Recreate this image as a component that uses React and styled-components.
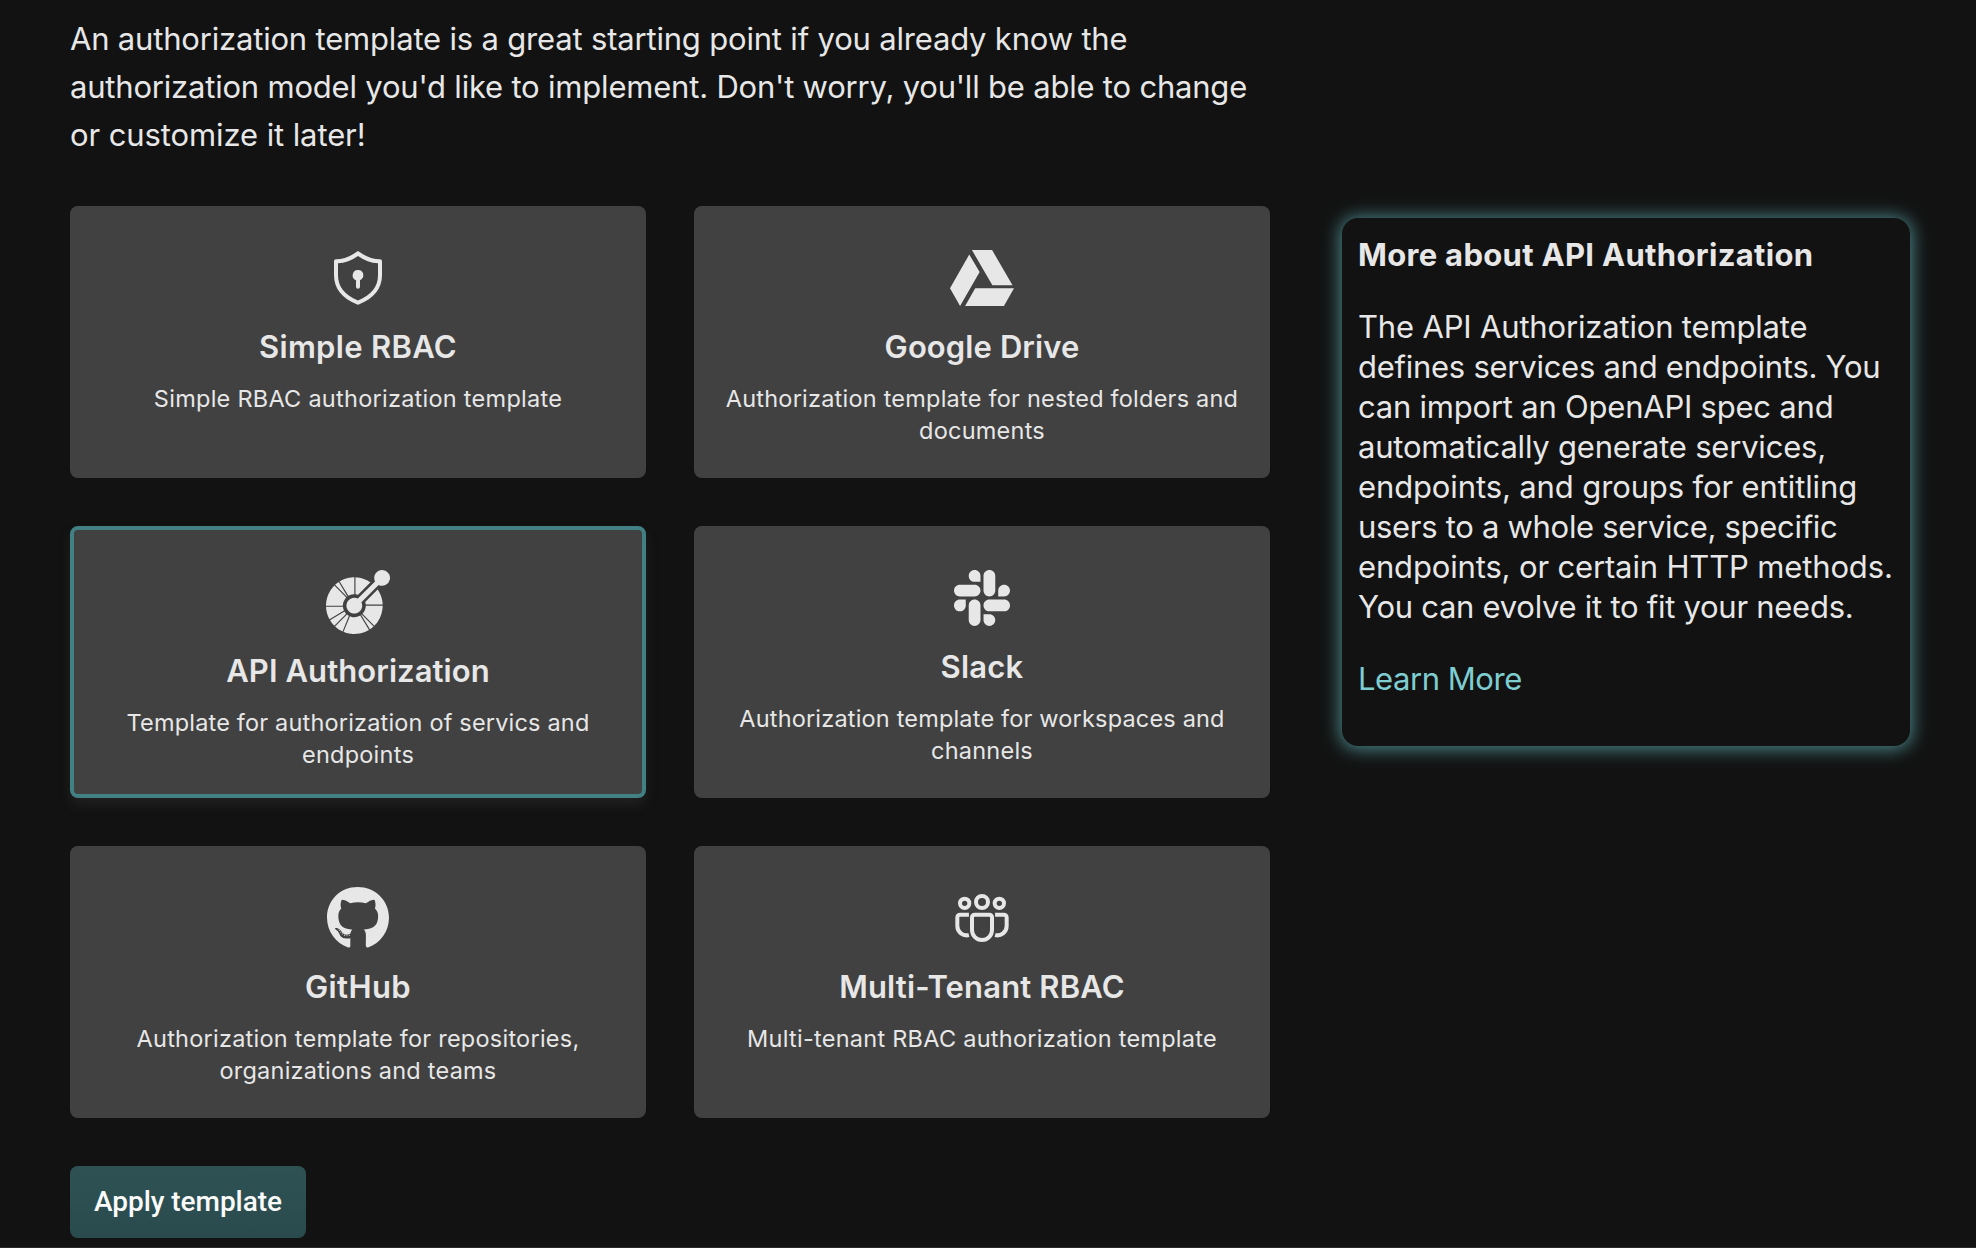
import React from "react";
import styled, { createGlobalStyle, css } from "styled-components";
import { FaGithub, FaGoogleDrive, FaSlack } from "react-icons/fa";
import { SiOpenapiinitiative } from "react-icons/si";

const GlobalStyle = createGlobalStyle`
  *, *::before, *::after { box-sizing: border-box; }
  body {
    margin: 0;
    background: #121212;
    color: #e7e7e7;
    font-family: Inter, "Liberation Sans", sans-serif;
  }
  h2, h3, p { margin: 0; }
`;

const Page = styled.div`
  display: flex;
  flex-direction: column;
  height: 1248px;
  padding: 15px 66px 0 70px;
  overflow: hidden;
`;
const Intro = styled.p`
  height: 144px;
  font-size: 31px;
  line-height: 48px;
`;
const Line = styled.span`
  display: block;
  white-space: nowrap;
  letter-spacing: ${(p) => p.$track || 0}px;
`;
const Content = styled.div`
  display: flex;
  align-items: flex-start;
  gap: 72px;
  margin-top: 47px;
`;
const Grid = styled.div`
  display: grid;
  grid-template-columns: repeat(2, 576px);
  grid-auto-rows: 272px;
  gap: 48px;
`;
const Card = styled.button`
  display: flex;
  flex-direction: column;
  align-items: center;
  padding: 40px 0 0;
  border: 0;
  border-radius: 8px;
  background: #414141;
  color: #e7e7e7;
  font-family: inherit;
  text-align: center;
  ${(p) =>
    p.$selected &&
    css`
      border: 4px solid #418083;
      box-shadow: 0 7px 12px rgba(65, 65, 65, 0.3);
    `}
`;
const IconBox = styled.span`
  display: flex;
  width: 64px;
  height: 64px;
  font-size: 64px;
`;
const Title = styled.h3`
  margin-top: 17px;
  font-size: 31px;
  font-weight: 600;
  line-height: 40px;
  letter-spacing: ${(p) => p.$track}px;
`;
const Description = styled.p`
  margin-top: 16px;
  font-size: 23.5px;
  line-height: 32px;
`;
const Panel = styled.aside`
  width: 568px;
  height: 528px;
  margin-top: 12px;
  padding: 17px 16px 0;
  border-radius: 16px;
  background: #121212;
  box-shadow: 0 1px 18px 2px #4c888b;
`;
const PanelTitle = styled.h2`
  font-size: 31px;
  font-weight: 700;
  line-height: 40px;
  letter-spacing: 0.31px;
`;
const PanelText = styled.p`
  margin-top: 32px;
  font-size: 31px;
  line-height: 40px;
`;
const Link = styled.a`
  display: block;
  margin-top: 32px;
  color: #7ecdd1;
  font-size: 31px;
  line-height: 40px;
  letter-spacing: -0.45px;
`;
const ApplyButton = styled.button`
  flex: none;
  width: 236px;
  height: 72px;
  margin-top: 48px;
  padding: 0;
  border: 0;
  border-radius: 8px;
  background: linear-gradient(#2e5254, #2a4b4d);
  color: #fafafa;
  font: 500 28px/72px Roboto, sans-serif;
  letter-spacing: -0.06px;
`;
const Footer = styled.div`
  flex: none;
  height: 1px;
  margin: auto -66px 0 -70px;
  background: #2b2b2b;
`;

const ShieldKeyhole = () => (
  <svg width="64" height="64" viewBox="0 0 24 24" fill="currentColor">
    <path
      fillRule="evenodd"
      d="M3 5.75c0-.41.34-.75.75-.75 2.66 0 5.26-.94 7.8-2.85.27-.2.63-.2.9 0C14.99 4.05 17.59 5 20.25 5c.41 0 .75.34.75.75V11c0 5-2.96 8.68-8.73 10.95a.75.75 0 0 1-.54 0C5.96 19.68 3 16 3 11V5.75Zm1.5.73V11c0 4.26 2.45 7.38 7.5 9.44 5.05-2.06 7.5-5.18 7.5-9.44V6.48c-2.63-.15-5.14-1.07-7.5-2.76-2.36 1.69-4.87 2.6-7.5 2.76Z"
    />
    <path d="M14 11c0 .74-.4 1.38-1.25 1.85v2.4a.75.75 0 0 1-1.5 0v-2.4A2 2 0 1 1 14 11Z" />
  </svg>
);
const PeopleTeam = () => (
  <svg width="64" height="64" viewBox="0 0 24 24" fill="none" stroke="currentColor" strokeWidth="1.5">
    <circle cx="12" cy="6" r="2.25" />
    <circle cx="5.5" cy="6.5" r="1.75" />
    <circle cx="18.5" cy="6.5" r="1.75" />
    <path d="M9.25 10.75h5.5a1 1 0 0 1 1 1v4.75a3.75 3.75 0 0 1-7.5 0v-4.75a1 1 0 0 1 1-1Z" />
    <path d="M7.1 10.75H3.75a1 1 0 0 0-1 1v3.25a3.5 3.5 0 0 0 4.35 3.4" />
    <path d="M16.9 10.75h3.35a1 1 0 0 1 1 1v3.25a3.5 3.5 0 0 1-4.35 3.4" />
  </svg>
);

const templates = [
  {
    icon: ShieldKeyhole,
    title: "Simple RBAC",
    titleTrack: 0.3,
    lines: [["Simple RBAC authorization template", 0.26]],
  },
  {
    icon: FaGoogleDrive,
    title: "Google Drive",
    titleTrack: 0.1,
    lines: [["Authorization template for nested folders and", 0.22], ["documents", 0.24]],
  },
  {
    icon: SiOpenapiinitiative,
    title: "API Authorization",
    titleTrack: 0.07,
    lines: [["Template for authorization of servics and", 0.18], ["endpoints", 0.24]],
    selected: true,
  },
  {
    icon: FaSlack,
    title: "Slack",
    titleTrack: 0.2,
    lines: [["Authorization template for workspaces and", 0.18], ["channels", 0.24]],
  },
  {
    icon: FaGithub,
    title: "GitHub",
    titleTrack: 0.4,
    lines: [["Authorization template for repositories,", 0.24], ["organizations and teams", 0.22]],
  },
  {
    icon: PeopleTeam,
    title: "Multi-Tenant RBAC",
    titleTrack: 0.15,
    lines: [["Multi-tenant RBAC authorization template", 0.26]],
  },
];
const introLines = [
  ["An authorization template is a great starting point if you already know the", -0.185],
  ["authorization model you'd like to implement. Don't worry, you'll be able to change", -0.2],
  ["or customize it later!", -0.1],
];
const panelLines = [
  ["The API Authorization template", -0.17],
  ["defines services and endpoints. You", -0.26],
  ["can import an OpenAPI spec and", -0.22],
  ["automatically generate services,", -0.22],
  ["endpoints, and groups for entitling", -0.12],
  ["users to a whole service, specific", -0.3],
  ["endpoints, or certain HTTP methods.", -0.15],
  ["You can evolve it to fit your needs.", -0.27],
];

export default function App() {
  return (
    <>
      <GlobalStyle />
      <Page>
        <Intro>
          {introLines.map(([text, track]) => (
            <Line key={text} $track={track}>{text}</Line>
          ))}
        </Intro>
        <Content>
          <Grid>
            {templates.map(({ icon: Icon, title, titleTrack, lines, selected }) => (
              <Card key={title} $selected={selected}>
                <IconBox><Icon /></IconBox>
                <Title $track={titleTrack}>{title}</Title>
                <Description>
                  {lines.map(([text, track]) => (
                    <Line key={text} $track={track}>{text}</Line>
                  ))}
                </Description>
              </Card>
            ))}
          </Grid>
          <Panel>
            <PanelTitle>More about API Authorization</PanelTitle>
            <PanelText>
              {panelLines.map(([text, track]) => (
                <Line key={text} $track={track}>{text}</Line>
              ))}
            </PanelText>
            <Link>Learn More</Link>
          </Panel>
        </Content>
        <ApplyButton>Apply template</ApplyButton>
        <Footer />
      </Page>
    </>
  );
}
